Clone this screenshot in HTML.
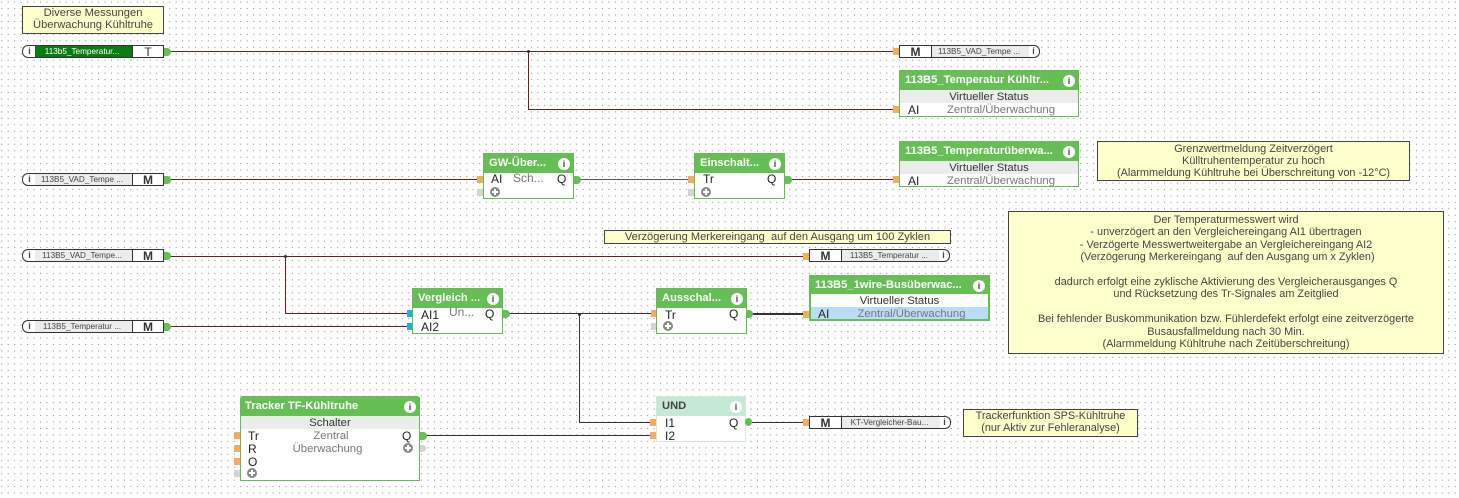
<!DOCTYPE html>
<html><head><meta charset="utf-8">
<style>
html,body{margin:0;padding:0;background:#fff}
#c{position:relative;width:1459px;height:498px;overflow:hidden;font-family:"Liberation Sans",sans-serif;font-size:12px;color:#333;background:#fff}
#c div{position:absolute;box-sizing:border-box;white-space:nowrap}
.n{background:#ffffcc;border:1px solid #444;text-align:center;line-height:12.4px;font-size:10.9px;color:#444;white-space:pre!important}
.l{background:#6b1f1f}.d{background:#333}
.pill{height:13px;border:1px solid #333;background:#fff}
.lab{top:0;height:11px;background:#ececec;font-size:8.2px;line-height:11px;color:#444;text-align:center;padding-right:3px}
.m{top:0;height:11px;font-weight:bold;font-size:12px;line-height:12px;text-align:center;color:#333;background:#fff}
.b{background:#fff;border:1px solid #66bb55}
.h{left:0;top:0;right:0;height:19px;background:#66bf55;color:#fff;font-weight:bold;font-size:11.2px;line-height:18px;padding-left:5px}
.i{width:12px;height:12px;border-radius:50%;background:#fff;color:#444;font-weight:bold;font-size:9px;line-height:12px;text-align:center}
.r{left:0;right:0;height:13px;line-height:15px;text-align:center;font-size:11.3px;color:#777}
.g{background:#ececec;color:#333}
.t{font-size:12px;line-height:15px;color:#222}
.gr{color:#777}
.po{width:6px;height:7px;background:#f4ad5c}
.pb{width:6px;height:7px;background:#1fb1d8}
.pg{width:6px;height:7px;background:#d4d4d0}
.q{width:7px;height:8px;border-radius:0 4px 4px 0;background:#66bf55}
.pl{width:10px;height:10px;border-radius:50%;background:linear-gradient(#fff,#fff) center/6px 2px no-repeat,linear-gradient(#fff,#fff) center/2px 6px no-repeat,#8a8a8a}
.dot{width:3px;height:3px;background:#333;border-radius:50%}
</style></head><body>
<div id="c">
<svg style="position:absolute;left:0;top:0" width="1459" height="498"><defs><pattern id="p" x="1.2" y="1.6" width="6.46" height="6.46" patternUnits="userSpaceOnUse"><rect width="1" height="1" fill="#8c8c8c"/></pattern></defs><rect width="1459" height="498" fill="url(#p)"/></svg>

<!-- wires -->
<div class="l" style="left:170px;top:51px;width:724px;height:1px"></div>
<div class="l" style="left:528px;top:51px;width:1px;height:58px"></div>
<div class="l" style="left:528px;top:109px;width:366px;height:1px"></div>
<div class="dot" style="left:527px;top:50px"></div>
<div class="l" style="left:170px;top:179px;width:308px;height:1px"></div>
<div class="d" style="left:578px;top:179px;width:111px;height:1px;background:#555"></div>
<div class="l" style="left:791px;top:179px;width:103px;height:1px"></div>
<div class="l" style="left:170px;top:256px;width:639px;height:1px"></div>
<div class="l" style="left:285px;top:256px;width:1px;height:57px"></div>
<div class="l" style="left:285px;top:313px;width:122px;height:1px"></div>
<div class="dot" style="left:284px;top:255px"></div>
<div class="l" style="left:170px;top:326px;width:237px;height:1px"></div>
<div class="d" style="left:509px;top:313px;width:142px;height:1px"></div>
<div class="d" style="left:579px;top:314px;width:1px;height:109px"></div>
<div class="d" style="left:579px;top:422px;width:72px;height:1px"></div>
<div class="dot" style="left:578px;top:313px"></div>
<div class="d" style="left:752px;top:313px;width:52px;height:2px"></div>
<div class="d" style="left:426px;top:435px;width:225px;height:1px"></div>
<div class="d" style="left:752px;top:422px;width:52px;height:1px"></div>

<!-- notes -->
<div class="n" style="left:22px;top:6px;width:142px;height:28px;font-size:11.2px;line-height:12px;padding-top:0">Diverse Messungen
Überwachung Kühltruhe</div>
<div class="n" style="left:1097px;top:141px;width:313px;height:40px;padding-top:0;line-height:12.2px;padding-top:1px">Grenzwertmeldung Zeitverzögert
Külltruhentemperatur zu hoch
(Alarmmeldung Kühltruhe bei Überschreitung von -12°C)</div>
<div class="n" style="left:1008px;top:211px;width:436px;height:143px;padding-top:2px">Der Temperaturmesswert wird
- unverzögert an den Vergleichereingang AI1 übertragen
- Verzögerte Messwertweitergabe an Vergleichereingang AI2
 (Verzögerung Merkereingang  auf den Ausgang um x Zyklen)

dadurch erfolgt eine zyklische Aktivierung des Vergleicherausganges Q
und Rücksetzung des Tr-Signales am Zeitglied

Bei fehlender Buskommunikation bzw. Fühlerdefekt erfolgt eine zeitverzögerte
Busausfallmeldung nach 30 Min.
(Alarmmeldung Kühltruhe nach Zeitüberschreitung)</div>
<div class="n" style="left:604px;top:230px;width:347px;height:14px;font-size:11.1px;line-height:13px">Verzögerung Merkereingang  auf den Ausgang um 100 Zyklen</div>
<div class="n" style="left:963px;top:409px;width:175px;height:28px;padding-top:0">Trackerfunktion SPS-Kühltruhe
(nur Aktiv zur Fehleranalyse)</div>

<!-- inputs -->
<div class="pill" style="left:22px;top:45px;width:142px;border-radius:6px 0 0 6px">
 <div class="lab" style="left:12px;width:97px;background:#0a7d12;color:#fff">113b5_Temperatur...</div>
 <div class="m" style="left:109px;width:31px;font-weight:normal;border-left:1px solid #333">T</div>
 <div class="i" style="left:2px;top:0;width:9px;height:11px;line-height:11px">i</div>
</div>
<div class="q" style="left:164px;top:48px"></div>

<div class="pill" style="left:22px;top:173px;width:142px;border-radius:6px 0 0 6px">
 <div class="lab" style="left:12px;width:97px">113B5_VAD_Tempe ...</div>
 <div class="m" style="left:109px;width:31px;border-left:1px solid #333">M</div>
 <div class="i" style="left:2px;top:0;width:9px;height:11px;line-height:11px">i</div>
</div>
<div class="q" style="left:164px;top:176px"></div>

<div class="pill" style="left:22px;top:249px;width:142px;border-radius:6px 0 0 6px">
 <div class="lab" style="left:12px;width:97px">113B5_VAD_Tempe...</div>
 <div class="m" style="left:109px;width:31px;border-left:1px solid #333">M</div>
 <div class="i" style="left:2px;top:0;width:9px;height:11px;line-height:11px">i</div>
</div>
<div class="q" style="left:164px;top:252px"></div>

<div class="pill" style="left:22px;top:320px;width:142px;border-radius:6px 0 0 6px">
 <div class="lab" style="left:12px;width:97px">113B5_Temperatur ...</div>
 <div class="m" style="left:109px;width:31px;border-left:1px solid #333">M</div>
 <div class="i" style="left:2px;top:0;width:9px;height:11px;line-height:11px">i</div>
</div>
<div class="q" style="left:164px;top:323px"></div>

<!-- outputs -->
<div class="po" style="left:893px;top:48px"></div>
<div class="pill" style="left:899px;top:45px;width:141px;border-radius:0 6px 6px 0">
 <div class="m" style="left:0;width:32px;border-right:1px solid #333">M</div>
 <div class="lab" style="left:32px;width:97px">113B5_VAD_Tempe ...</div>
 <div class="i" style="left:129px;top:0;width:9px;height:11px;line-height:11px">i</div>
</div>
<div class="po" style="left:803px;top:253px"></div>
<div class="pill" style="left:809px;top:249px;width:141px;border-radius:0 6px 6px 0">
 <div class="m" style="left:0;width:32px;border-right:1px solid #333">M</div>
 <div class="lab" style="left:32px;width:97px">113B5_Temperatur ...</div>
 <div class="i" style="left:129px;top:0;width:9px;height:11px;line-height:11px">i</div>
</div>
<div class="po" style="left:803px;top:419px"></div>
<div class="pill" style="left:809px;top:416px;width:142px;border-radius:0 6px 6px 0">
 <div class="m" style="left:0;width:32px;border-right:1px solid #333">M</div>
 <div class="lab" style="left:32px;width:98px">KT-Vergleicher-Bau...</div>
 <div class="i" style="left:130px;top:0;width:9px;height:11px;line-height:11px">i</div>
</div>

<!-- status 1 -->
<div class="po" style="left:893px;top:106px"></div>
<div class="b" style="left:899px;top:70px;width:180px;height:47px">
 <div class="h">113B5_Temperatur Kühltr...</div><div class="i" style="left:163px;top:4px">i</div>
 <div class="r g" style="top:19px">Virtueller Status</div>
 <div class="r gr" style="top:32px;padding-left:24px">Zentral/Überwachung</div>
 <div class="t" style="left:8px;top:32px">AI</div>
</div>
<!-- status 2 -->
<div class="po" style="left:893px;top:176px"></div>
<div class="b" style="left:899px;top:141px;width:180px;height:46px">
 <div class="h">113B5_Temperaturüberwa...</div><div class="i" style="left:163px;top:4px">i</div>
 <div class="r g" style="top:19px">Virtueller Status</div>
 <div class="r gr" style="top:32px;padding-left:24px">Zentral/Überwachung</div>
 <div class="t" style="left:8px;top:32px">AI</div>
</div>
<!-- status 3 -->
<div class="po" style="left:803px;top:311px"></div>
<div class="b" style="left:809px;top:275px;width:181px;height:46px;border:2px solid #66bf55">
 <div class="h" style="height:17px;line-height:16px;padding-left:4px">113B5_1wire-Busüberwac...</div><div class="i" style="left:162px;top:3px">i</div>
 <div class="r" style="top:17px;color:#333">Virtueller Status</div>
 <div class="r gr" style="top:30px;background:#b9dcf7;padding-left:24px;height:12px">Zentral/Überwachung</div>
 <div class="t" style="left:7px;top:30px">AI</div>
</div>

<!-- GW -->
<div class="po" style="left:477px;top:176px"></div>
<div class="pg" style="left:477px;top:189px"></div>
<div class="b" style="left:483px;top:153px;width:91px;height:46px">
 <div class="h">GW-Über...</div><div class="i" style="left:74px;top:4px">i</div>
 <div class="t" style="left:7px;top:18px">AI</div>
 <div class="t gr" style="left:29px;top:17px">Sch...</div>
 <div class="t" style="left:73px;top:18px">Q</div>
 <div class="pl" style="left:6px;top:33px"></div>
</div>
<div class="q" style="left:574px;top:176px"></div>

<!-- Einschalt -->
<div class="po" style="left:688px;top:176px"></div>
<div class="pg" style="left:688px;top:189px"></div>
<div class="b" style="left:694px;top:153px;width:91px;height:46px">
 <div class="h">Einschalt...</div><div class="i" style="left:74px;top:4px">i</div>
 <div class="t" style="left:8px;top:18px">Tr</div>
 <div class="t" style="left:72px;top:18px">Q</div>
 <div class="pl" style="left:6px;top:33px"></div>
</div>
<div class="q" style="left:785px;top:176px"></div>

<!-- Vergleich -->
<div class="pb" style="left:407px;top:310px"></div>
<div class="pb" style="left:407px;top:323px"></div>
<div class="b" style="left:412px;top:288px;width:91px;height:46px">
 <div class="h">Vergleich ...</div><div class="i" style="left:74px;top:4px">i</div>
 <div class="t" style="left:8px;top:19px">AI1</div>
 <div class="t" style="left:8px;top:31px">AI2</div>
 <div class="t gr" style="left:36px;top:16px">Un...</div>
 <div class="t" style="left:72px;top:18px">Q</div>
</div>
<div class="q" style="left:503px;top:310px"></div>

<!-- Ausschal -->
<div class="po" style="left:651px;top:310px"></div>
<div class="pg" style="left:651px;top:323px"></div>
<div class="b" style="left:656px;top:288px;width:91px;height:46px">
 <div class="h">Ausschal...</div><div class="i" style="left:74px;top:4px">i</div>
 <div class="t" style="left:8px;top:19px">Tr</div>
 <div class="t" style="left:72px;top:18px">Q</div>
 <div class="pl" style="left:6px;top:32px"></div>
</div>
<div class="q" style="left:746px;top:310px"></div>

<!-- Tracker -->
<div class="po" style="left:234px;top:432px"></div>
<div class="po" style="left:234px;top:445px"></div>
<div class="po" style="left:234px;top:458px"></div>
<div class="pg" style="left:234px;top:470px"></div>
<div class="b" style="left:240px;top:396px;width:180px;height:85px;border-radius:3px 3px 0 0">
 <div class="h" style="padding-left:4px;line-height:19px">Tracker TF-Kühltruhe</div><div class="i" style="left:163px;top:4px">i</div>
 <div class="r g" style="top:19px">Schalter</div>
 <div class="r gr" style="top:32px;padding-left:2px">Zentral</div>
 <div class="r gr" style="top:45px;padding-right:5px">Überwachung</div>
 <div class="t" style="left:7px;top:32px">Tr</div>
 <div class="t" style="left:7px;top:45px">R</div>
 <div class="t" style="left:7px;top:58px">O</div>
 <div class="t" style="left:161px;top:32px">Q</div>
 <div class="pl" style="left:6px;top:71px"></div>
 <div class="pl" style="left:162px;top:46px"></div>
</div>
<div class="q" style="left:420px;top:432px"></div>
<div class="pg" style="left:420px;top:445px;border-radius:0 4px 4px 0"></div>

<!-- UND -->
<div class="po" style="left:650px;top:419px"></div>
<div class="po" style="left:650px;top:432px"></div>
<div class="b" style="left:656px;top:396px;width:90px;height:46px;border-color:#cfe9da">
 <div class="h" style="background:#c6e9d6;color:#444;padding-left:5px;line-height:19px">UND</div><div class="i" style="left:73px;top:4px">i</div>
 <div class="t" style="left:8px;top:19px">I1</div>
 <div class="t" style="left:8px;top:32px">I2</div>
 <div class="t" style="left:72px;top:19px">Q</div>
</div>
<div class="q" style="left:745px;top:418px;border-radius:50%"></div>
</div>
</body></html>
